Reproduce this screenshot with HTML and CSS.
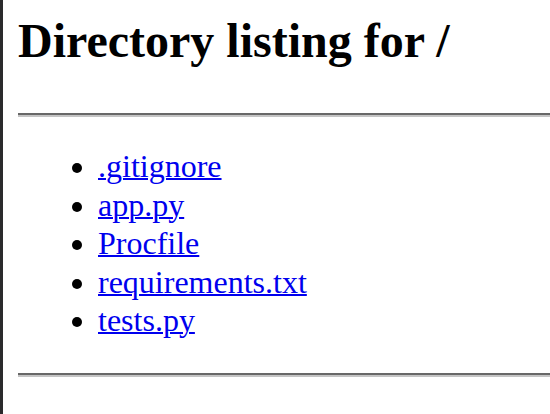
FILE: index.html
```html
<!DOCTYPE html>
<html>
<head>
<meta charset="utf-8">
<title>Directory listing for /</title>
<link rel="stylesheet" href="styles.css">
</head>
<body>
<div class="edge"></div>
<main class="page">
<h1 class="title">Directory listing for /</h1>
<hr class="rule">
<ul class="files">
<li><a href="#">.gitignore</a></li>
<li><a href="#">app.py</a></li>
<li><a href="#">Procfile</a></li>
<li><a href="#">requirements.txt</a></li>
<li><a href="#">tests.py</a></li>
</ul>
<hr class="rule">
</main>
</body>
</html>
```

FILE: styles.css
```css
html, body {
  margin: 0;
  padding: 0;
  background: #ffffff;
  height: 100%;
}
body {
  display: flex;
  font-family: "Liberation Serif", "Times New Roman", serif;
  color: #000000;
  overflow: hidden;
}
.edge {
  flex: 0 0 3px;
  background: #2a2a2c;
}
.page {
  flex: 1;
  padding-left: 15px;
  padding-top: 14px;
}
.title {
  margin: 0;
  font-size: 48px;
  font-weight: bold;
  line-height: 54px;
}
.rule {
  margin: 45px 0 0 0;
  height: 0;
  border: none;
  border-top: 2px solid #686868;
  border-bottom: 2px solid #c4c4c4;
}
.files {
  margin: 30px 0 33px 0;
  padding-left: 80px;
  font-size: 32px;
  line-height: 38.5px;
}
.files + .rule {
  margin-top: 0;
}
.files a {
  color: #0000ee;
  text-decoration: underline;
  text-decoration-thickness: 2px;
}
```
